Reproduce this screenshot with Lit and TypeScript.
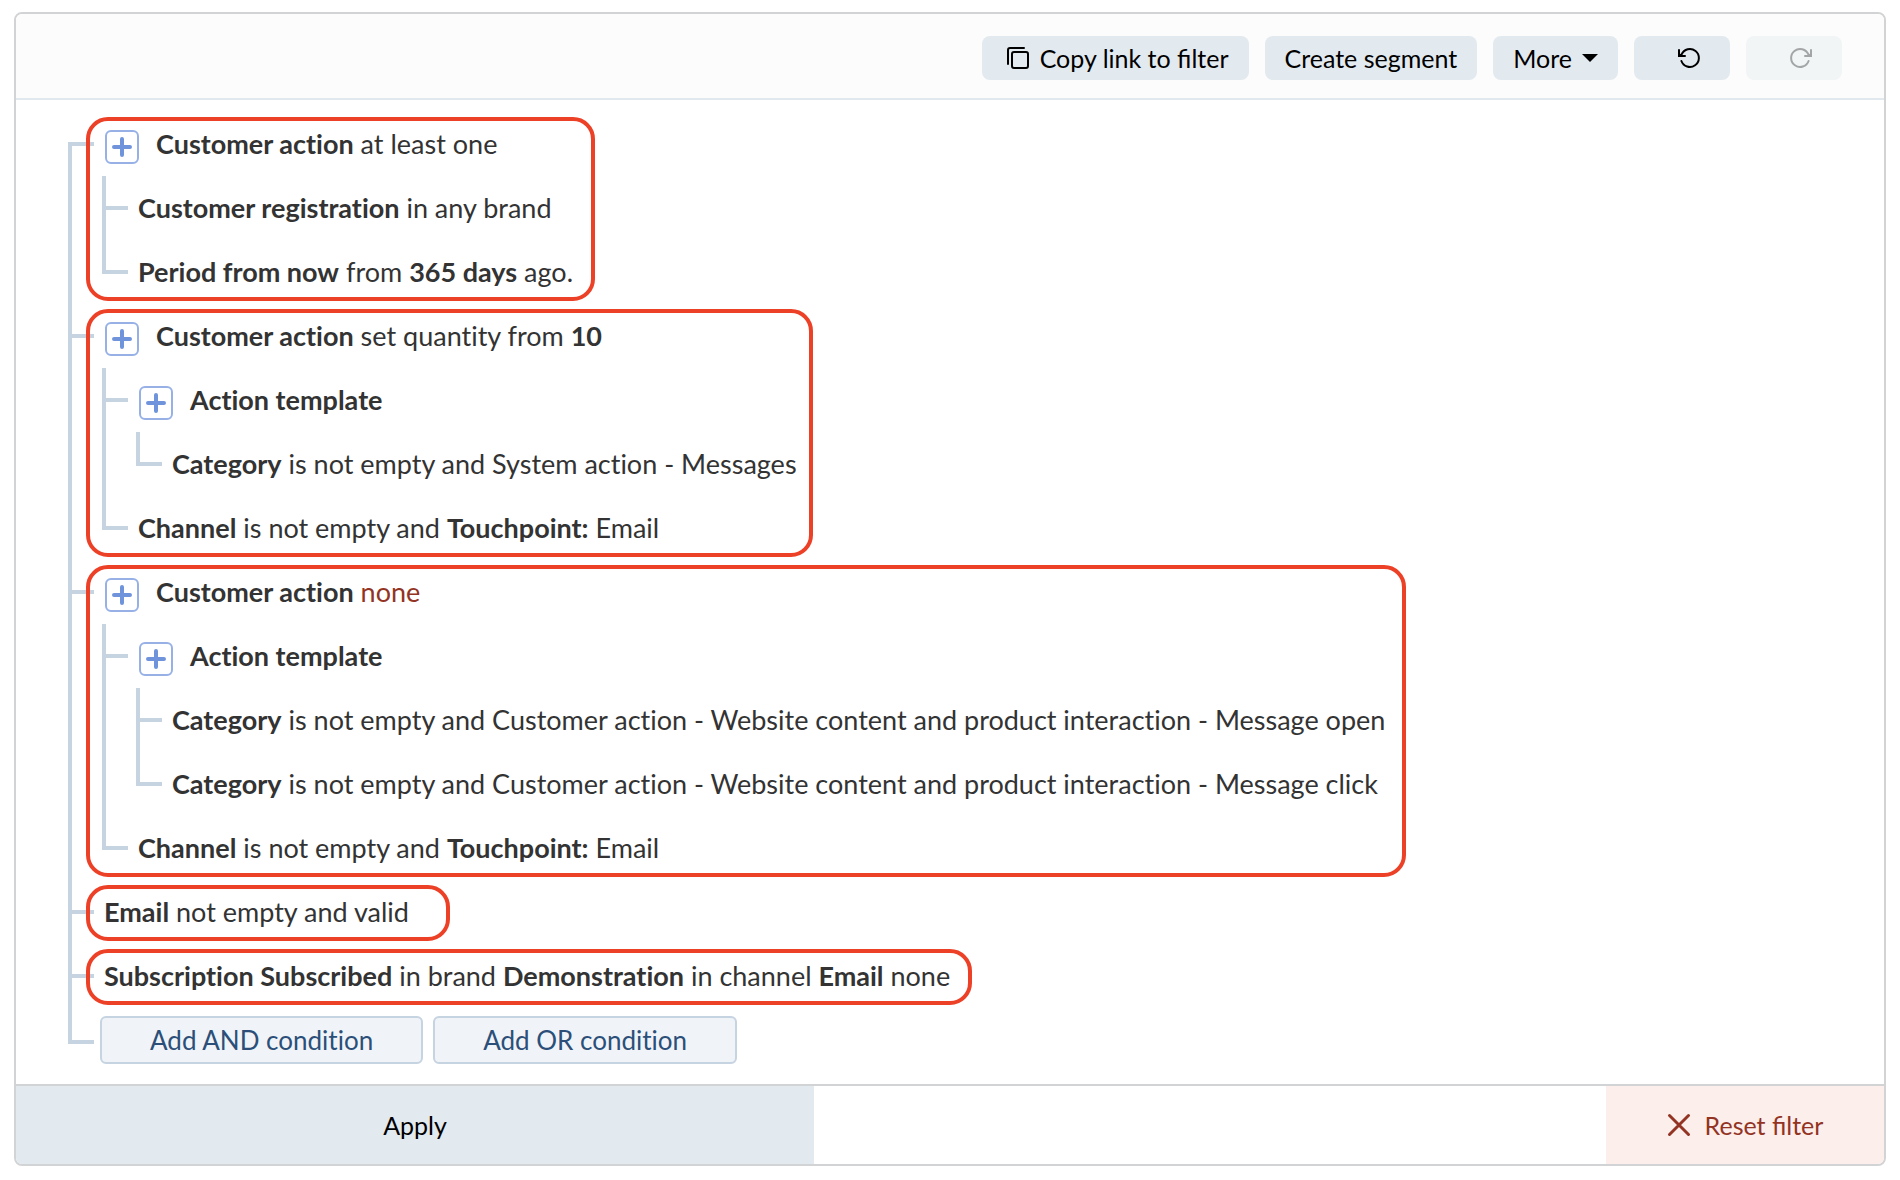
import { LitElement, html, css, svg, nothing, TemplateResult } from "lit";
import { customElement, property } from "lit/decorators.js";
import { classMap } from "lit/directives/class-map.js";
import { styleMap } from "lit/directives/style-map.js";

type Tone = "strong" | "plain" | "negative";

interface Part {
  text: string;
  tone: Tone;
}

interface Condition {
  parts: Part[];
  expandable?: boolean;
  /** Width of the highlight frame around the condition, in pixels. */
  frame?: number;
  children?: Condition[];
}

const b = (text: string): Part => ({ text, tone: "strong" });
const t = (text: string): Part => ({ text, tone: "plain" });
const neg = (text: string): Part => ({ text, tone: "negative" });

const CONDITIONS: Condition[] = [
  {
    parts: [b("Customer action"), t("at least one")],
    expandable: true,
    frame: 509,
    children: [
      { parts: [b("Customer registration"), t("in any brand")] },
      { parts: [b("Period from now"), t("from"), b("365 days"), t("ago.")] },
    ],
  },
  {
    parts: [b("Customer action"), t("set quantity from"), b("10")],
    expandable: true,
    frame: 727,
    children: [
      {
        parts: [b("Action template")],
        expandable: true,
        children: [
          { parts: [b("Category"), t("is not empty and System action - Messages")] },
        ],
      },
      { parts: [b("Channel"), t("is not empty and"), b("Touchpoint:"), t("Email")] },
    ],
  },
  {
    parts: [b("Customer action"), neg("none")],
    expandable: true,
    frame: 1320,
    children: [
      {
        parts: [b("Action template")],
        expandable: true,
        children: [
          {
            parts: [
              b("Category"),
              t("is not empty and Customer action - Website content and product interaction - Message open"),
            ],
          },
          {
            parts: [
              b("Category"),
              t("is not empty and Customer action - Website content and product interaction - Message click"),
            ],
          },
        ],
      },
      { parts: [b("Channel"), t("is not empty and"), b("Touchpoint:"), t("Email")] },
    ],
  },
  { parts: [b("Email"), t("not empty and valid")], frame: 364 },
  {
    parts: [
      b("Subscription Subscribed"),
      t("in brand"),
      b("Demonstration"),
      t("in channel"),
      b("Email"),
      t("none"),
    ],
    frame: 886,
  },
];

const rotateArrow = svg`
  <path d="M2 4V10H8" />
  <path d="M2 10L4.6 8.4A9 9 0 1 1 4.4 15" />
`;

const icons = {
  copy: html`<svg class="icon" width="24" height="24" viewBox="0 0 24 24" aria-hidden="true">
    <rect x="6" y="6" width="16" height="16" rx="2" />
    <path d="M2 18V4A2 2 0 0 1 4 2H18" />
  </svg>`,
  undo: html`<svg class="icon" width="24" height="24" viewBox="0 0 24 24" aria-hidden="true">
    ${rotateArrow}
  </svg>`,
  redo: html`<svg class="icon" width="24" height="24" viewBox="0 0 24 24" aria-hidden="true">
    <g transform="matrix(-1 0 0 1 24 0)">${rotateArrow}</g>
  </svg>`,
  caret: html`<svg class="caret" width="16" height="8" viewBox="0 0 16 8" aria-hidden="true">
    <path d="M0 0H16L8 8Z" />
  </svg>`,
  cross: html`<svg class="icon cross" width="24" height="24" viewBox="0 0 24 24" aria-hidden="true">
    <path d="M2.5 2.5L21.5 21.5M21.5 2.5L2.5 21.5" />
  </svg>`,
  plus: html`<svg class="plus" width="20" height="20" viewBox="0 0 20 20" aria-hidden="true">
    <path d="M2 10H18M10 2V18" />
  </svg>`,
};

const base = css`
  * {
    box-sizing: border-box;
  }
  button {
    margin: 0;
    padding: 0;
    border: 0;
    font: inherit;
    color: inherit;
    cursor: pointer;
  }
  .icon {
    flex: none;
    fill: none;
    stroke: currentColor;
    stroke-width: 2;
    stroke-linecap: round;
  }
`;

@customElement("condition-tree")
export class ConditionTree extends LitElement {
  @property({ attribute: false }) conditions: Condition[] = [];

  static styles = [
    base,
    css`
      :host {
        display: block;
        font-size: 27px;
        font-variant-ligatures: none;
      }
      .list {
        margin: 0;
        padding: 0;
        list-style: none;
      }
      .nested {
        margin-left: -2px;
      }
      .item {
        position: relative;
        display: flex;
        gap: 10px;
      }
      .rail {
        flex: none;
        width: 26px;
        display: flex;
        flex-direction: column;
      }
      .elbow {
        height: 34px;
        border: solid #c6d3e1;
        border-width: 0 0 4px 4px;
      }
      .elbow.start {
        height: 4px;
        margin-top: 30px;
      }
      .elbow.actions-elbow {
        height: 36px;
      }
      .stem {
        flex: 1;
        border-left: 4px solid #c6d3e1;
      }
      .body {
        flex: 1;
        min-width: 0;
      }
      .row {
        display: flex;
        align-items: center;
        min-height: 64px;
      }
      .toggle {
        display: flex;
        flex: none;
        align-items: center;
        justify-content: center;
        width: 34px;
        height: 34px;
        margin: 6px 17px 0 1px;
        border: 2px solid #97b1e7;
        border-radius: 6px;
        background: #fff;
      }
      .plus {
        fill: none;
        stroke: #6f94dc;
        stroke-width: 4;
        stroke-linecap: round;
      }
      .text {
        margin: 0;
      }
      .strong {
        font-weight: 700;
      }
      .negative {
        color: #933323;
      }
      .frame {
        position: absolute;
        top: 5px;
        bottom: 3px;
        left: 18px;
        border: 4px solid #ed4127;
        border-radius: 22px;
        pointer-events: none;
      }
      .actions {
        display: flex;
        gap: 10px;
        padding: 8px 0 12px;
        margin-left: -4px;
      }
      .add {
        height: 48px;
        padding: 0 48px;
        border: 2px solid #c6d3e0;
        border-radius: 6px;
        background: #f0f4f8;
        color: #2c4f79;
        font-size: 26px;
      }
    `,
  ];

  private renderItem(c: Condition, first: boolean, last: boolean): TemplateResult {
    return html`<li class="item">
      <div class="rail">
        <div class=${classMap({ elbow: true, start: first })}></div>
        ${last ? nothing : html`<div class="stem"></div>`}
      </div>
      <div class="body">
        <div class="row">
          ${c.expandable
            ? html`<button class="toggle" type="button" aria-label="Add nested condition">${icons.plus}</button>`
            : nothing}
          <p class="text">
            ${c.parts.map((p, i) => html`${i ? " " : ""}<span class=${p.tone}>${p.text}</span>`)}
          </p>
        </div>
        ${c.children
          ? html`<ul class="list nested">
              ${c.children.map((child, i, all) => this.renderItem(child, false, i === all.length - 1))}
            </ul>`
          : nothing}
      </div>
      ${c.frame ? html`<div class="frame" style=${styleMap({ width: `${c.frame}px` })}></div>` : nothing}
    </li>`;
  }

  render() {
    return html`<ul class="list">
      ${this.conditions.map((c, i) => this.renderItem(c, i === 0, false))}
      <li class="item">
        <div class="rail"><div class="elbow actions-elbow"></div></div>
        <div class="body actions">
          <button class="add" type="button">Add AND condition</button>
          <button class="add" type="button">Add OR condition</button>
        </div>
      </li>
    </ul>`;
  }
}

@customElement("app-root")
export class AppRoot extends LitElement {
  static styles = [
    base,
    css`
      :host {
        display: block;
        padding: 12px 14px;
        background: #fff;
        color: #333;
        font-family: Lato, "Noto Sans", sans-serif;
        font-size: 25px;
        line-height: 32px;
      }
      .panel {
        overflow: hidden;
        border: 2px solid #d2d3d4;
        border-radius: 8px;
      }
      .toolbar {
        display: flex;
        justify-content: flex-end;
        flex-wrap: wrap;
        gap: 16px;
        padding: 22px 42px 18px;
        border-bottom: 2px solid #e2e9ee;
        background: #fcfcfc;
        color: #000;
      }
      .tool {
        display: flex;
        align-items: center;
        justify-content: center;
        gap: 10px;
        height: 44px;
        padding: 0 20px;
        border-radius: 8px;
        background: #e2e9ef;
      }
      .tool .icon {
        margin-left: 4px;
      }
      .square {
        width: 96px;
        padding: 0 0 0 10px;
      }
      .tool:disabled {
        background: #f1f5f6;
        color: #a3a5a6;
      }
      .caret {
        fill: currentColor;
      }
      .tree {
        padding: 12px 52px 8px;
      }
      .footer {
        display: grid;
        grid-template-columns: 798fr 792fr 278px;
        border-top: 2px solid #d2d3d4;
      }
      .apply,
      .reset {
        display: flex;
        align-items: center;
        justify-content: center;
        gap: 14px;
        height: 78px;
      }
      .apply {
        background: #e2e9ef;
        color: #000;
      }
      .reset {
        grid-column: 3;
        background: #fceeeb;
        color: #933323;
      }
      .cross {
        stroke-width: 3;
      }
    `,
  ];

  render() {
    return html`<main class="panel">
      <header class="toolbar">
        <button class="tool" type="button">${icons.copy}<span>Copy link to filter</span></button>
        <button class="tool" type="button">Create segment</button>
        <button class="tool" type="button"><span>More</span>${icons.caret}</button>
        <button class="tool square" type="button" aria-label="Undo">${icons.undo}</button>
        <button class="tool square" type="button" aria-label="Redo" disabled>${icons.redo}</button>
      </header>
      <condition-tree class="tree" .conditions=${CONDITIONS}></condition-tree>
      <footer class="footer">
        <button class="apply" type="button">Apply</button>
        <button class="reset" type="button">${icons.cross}<span>Reset filter</span></button>
      </footer>
    </main>`;
  }
}
